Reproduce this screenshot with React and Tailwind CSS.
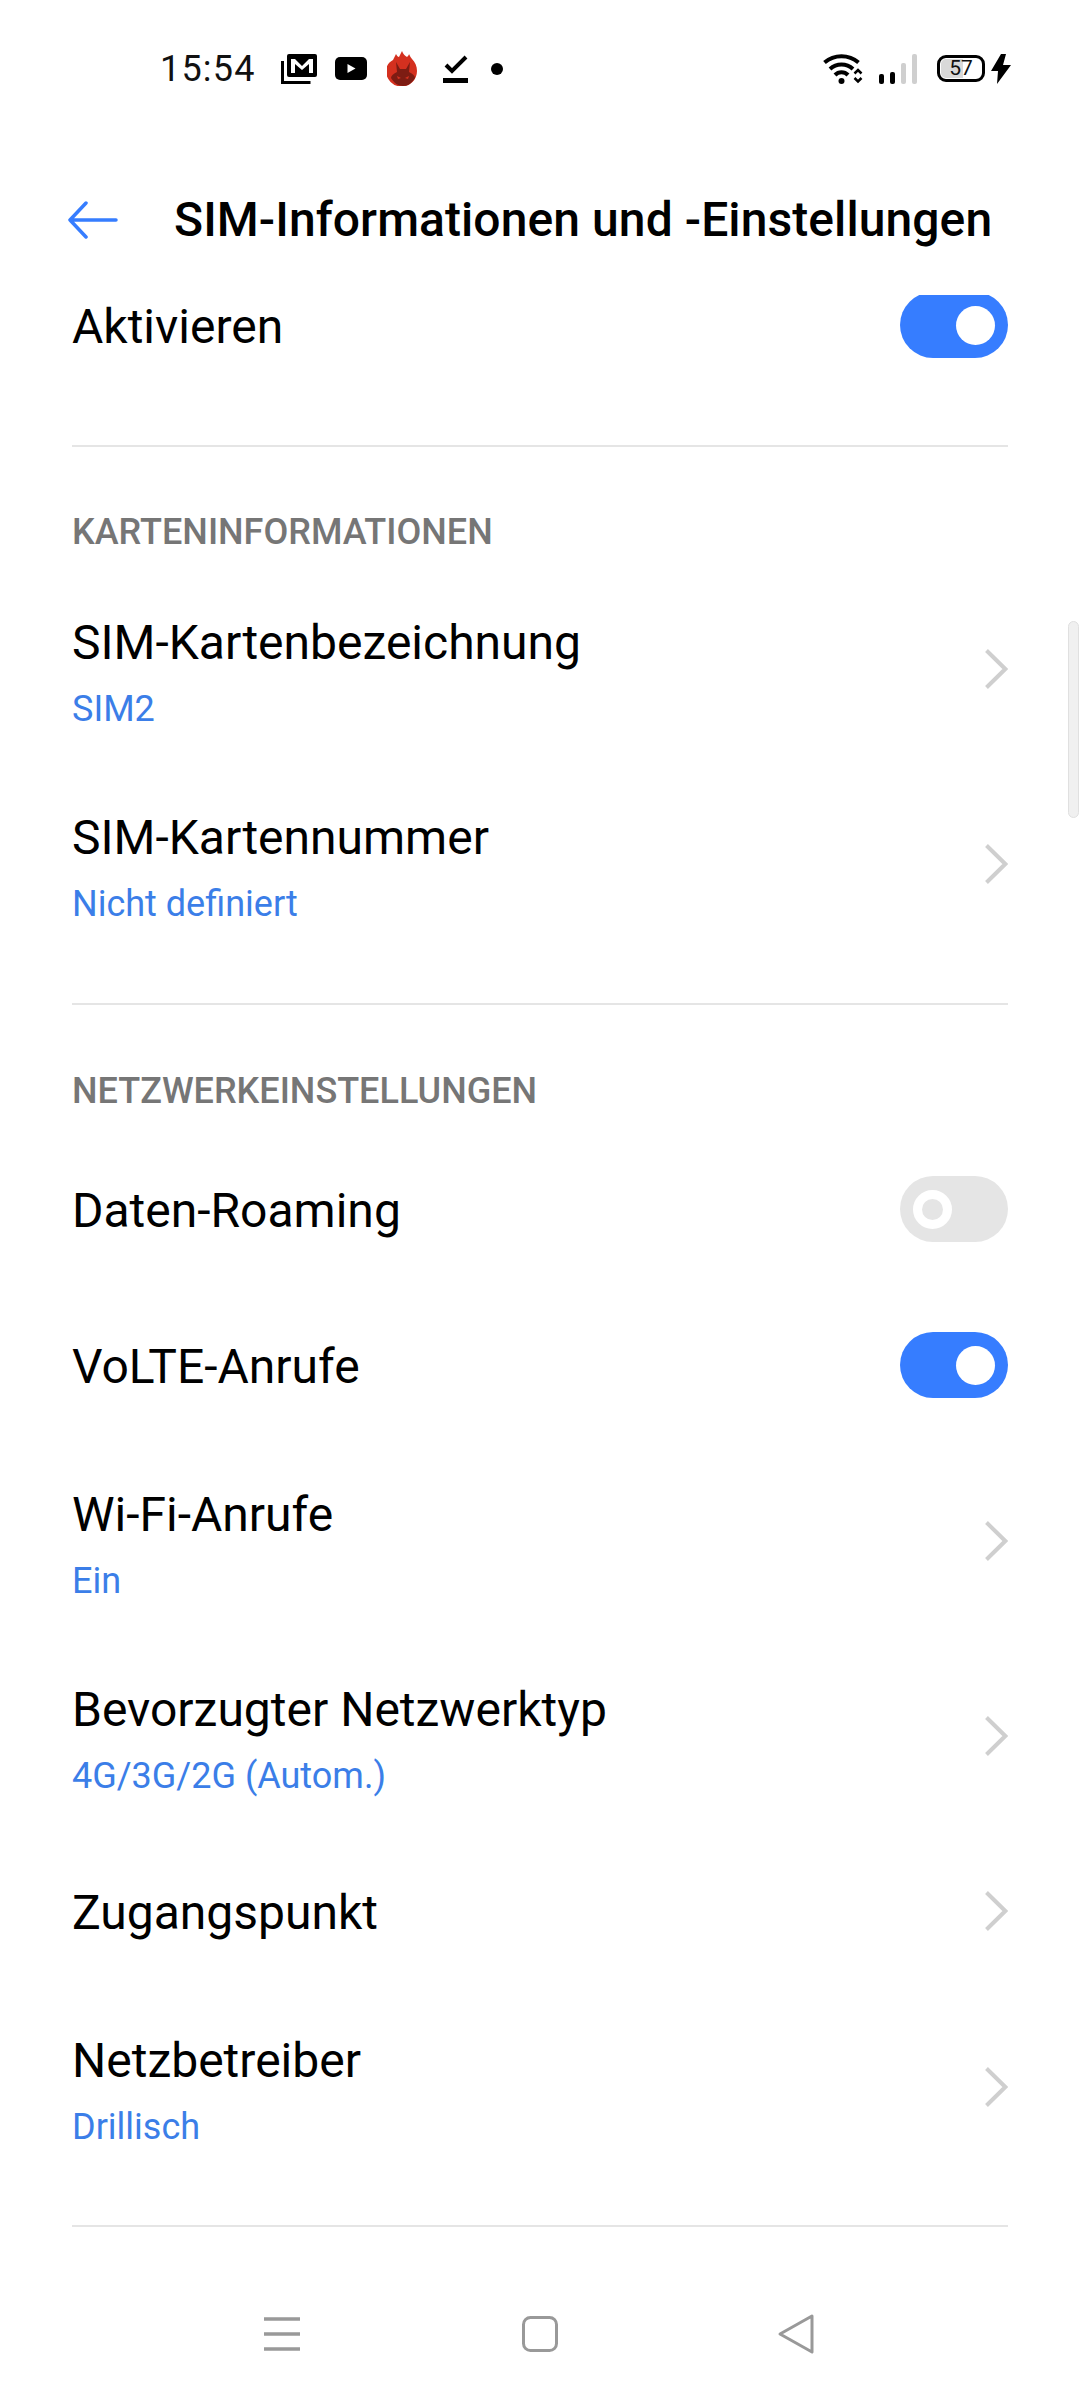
import React from 'react';

const Chevron = () => (
  <svg width="23" height="40" viewBox="0 0 23 40" fill="none" className="shrink-0">
    <path d="M1.500 1.500 L20.300 20 L1.500 38.500" stroke="#cfcfcf" strokeWidth="4" />
  </svg>
);

const Toggle = ({ on }) => (
  <div className={`w-[108px] h-[66px] rounded-full flex items-center shrink-0 ${on ? 'bg-[#367dff] justify-end pr-[13px]' : 'bg-[#e5e5e5] pl-[13px]'}`}>
    {on ? (
      <div className="w-[39px] h-[39px] rounded-full bg-white" />
    ) : (
      <div className="w-[39px] h-[39px] rounded-full border-[9px] border-white" />
    )}
  </div>
);

const Row = ({ title, sub, right }) => (
  <div className={`flex items-center justify-between ${sub ? 'h-[195px]' : 'h-[156px]'}`}>
    <div className={`flex flex-col ${sub ? 'pt-[8px]' : 'pt-[3px]'}`}>
      <div className="text-[48px] leading-[66px] text-black">{title}</div>
      {sub && <div className="mt-[6px] text-[36px] leading-[54px] text-[#3b7ee8]">{sub}</div>}
    </div>
    {right}
  </div>
);

const SectionTitle = ({ children }) => (
  <div className="text-[36px] leading-[48px] font-medium text-[#767676]">{children}</div>
);

const Divider = () => <div className="h-[2px] bg-[#e5e5e5]" />;

const StatusBar = () => (
  <div className="h-[136px] flex items-center justify-between pl-[160px] pr-[69px] pt-[1px]">
    <div className="flex items-center">
      <span className="text-[36px] text-[#111] tracking-[1.2px] w-[121px]">15:54</span>
      <div className="flex items-center">
        <svg width="36" height="30" viewBox="0 0 36 30" className="mr-[18px]">
          <path d="M8 0h26a2 2 0 0 1 2 2v19a2 2 0 0 1-2 2H8a2 2 0 0 1-2-2V2a2 2 0 0 1 2-2z" fill="#000" />
          <path d="M10 19V5h4l7 7 7-7h4v14h-4V10l-7 6-7-6v9z" fill="#fff" />
          <path d="M1.500 7v21.500h28" stroke="#000" strokeWidth="3" fill="none" />
        </svg>
        <svg width="32" height="23" viewBox="0 0 32 23" className="mr-[20px]">
          <rect width="32" height="23" rx="5" fill="#000" />
          <path d="M12.500 7v9l8-4.500z" fill="#fff" />
        </svg>
        <svg width="32" height="35" viewBox="0 0 32 35" className="mr-[24px]">
          <path d="M9 3c1 2 2 3 3 3 1-2 2-4 3-6 1 3 3 5 5 6 1-1 2-2 2-3 1 2 2 4 3 5 3 3 5 7 5 12a15.500 15.500 0 0 1-31 0c0-5 3-9 7-11 1-2 2-4 3-6z" fill="#d4301f" />
          <path d="M9 11l4 7h6l4-7-1 10c4 2 6 4 6 6-3 5-7 8-12 8s-9-3-12-8c0-2 2-4 6-6z" fill="#7d1c13" />
          <path d="M10 25l4 2-3 1zM22 25l-4 2 3 1z" fill="#d4301f" />
        </svg>
        <svg width="25" height="28" viewBox="0 0 25 28" className="mr-[23px]">
          <path d="M3 10l6 6L23 2" stroke="#000" strokeWidth="4" fill="none" />
          <rect y="23" width="25" height="5" fill="#000" />
        </svg>
        <div className="w-[12px] h-[12px] rounded-full bg-black" />
      </div>
    </div>
    <div className="flex items-center">
      <svg width="40" height="30" viewBox="0 0 40 30" className="mr-[16px]">
        <path d="M1.500 8.500a26 26 0 0 1 34 0" stroke="#000" strokeWidth="4" fill="none" />
        <path d="M7 15a17 17 0 0 1 23 0" stroke="#000" strokeWidth="4" fill="none" />
        <path d="M12 21a9 9 0 0 1 13 0" stroke="#000" strokeWidth="4" fill="none" />
        <circle cx="18.500" cy="27" r="3" fill="#000" />
        <path d="M31.500 19.500l3.500-3.500 3.500 3.500M31.500 24l3.500 3.500 3.500-3.500" stroke="#000" strokeWidth="2.500" fill="none" />
      </svg>
      <div className="flex items-end gap-[6px] h-[30px] mr-[20px]">
        <div className="w-[5px] h-[10px] rounded-[2px] bg-black" />
        <div className="w-[5px] h-[12px] rounded-[2px] bg-black" />
        <div className="w-[5px] h-[21px] rounded-[2px] bg-[#cfcfcf]" />
        <div className="w-[5px] h-[30px] rounded-[2px] bg-[#cfcfcf]" />
      </div>
      <div className="relative w-[48px] h-[27px] rounded-[9px] border-[3px] border-black overflow-hidden flex items-center justify-center mr-[6px]">
        <div className="absolute left-[1px] top-[1px] bottom-[1px] w-[22px] rounded-l-[5px] bg-[#d9d9d9]" />
        <span className="relative text-[21px] leading-none text-[#111]">57</span>
      </div>
      <svg width="20" height="30" viewBox="0 0 20 30">
        <path d="M10 0L0 17h7l-1 13 14-19h-8l3-11z" fill="#000" />
      </svg>
    </div>
  </div>
);

const Header = () => (
  <div className="h-[159px] flex items-center pl-[68px] pt-[8px]">
    <svg width="50" height="38" viewBox="0 0 50 38" fill="none" className="shrink-0 mr-[56px]">
      <path d="M18 2L2 19l16 17M2 19h46" stroke="#367dff" strokeWidth="3.500" strokeLinecap="round" strokeLinejoin="round" />
    </svg>
    <div className="text-[48px] font-medium text-black tracking-[0.08px] whitespace-nowrap">SIM-Informationen und -Einstellungen</div>
  </div>
);

const NavBar = () => (
  <div className="h-[173px] flex items-center pl-[264px] pt-[41px]">
    <svg width="36" height="36" viewBox="0 0 36 36" className="mr-[222px]">
      <path d="M0 3h36M0 18h36M0 33h36" stroke="#999" strokeWidth="3.500" />
    </svg>
    <svg width="36" height="36" viewBox="0 0 36 36" className="mr-[219px]">
      <rect x="1.500" y="1.500" width="33" height="33" rx="7" stroke="#999" strokeWidth="3" fill="none" />
    </svg>
    <svg width="38" height="42" viewBox="0 0 38 42">
      <path d="M35 3L3 21l32 18z" stroke="#999" strokeWidth="3" strokeLinejoin="round" fill="none" />
    </svg>
  </div>
);

export default function App() {
  return (
    <div className="relative w-[1080px] h-[2400px] bg-white overflow-hidden" style={{ fontFamily: 'Roboto, "Noto Sans", sans-serif' }}>
      <StatusBar />
      <Header />
      <div className="h-[1932px] overflow-hidden px-[72px]">
        <div className="-mt-[48px]">
          <Row title="Aktivieren" right={<Toggle on />} />
        </div>
        <div className="pt-[42px]"><Divider /></div>
        <div className="pt-[61px] pb-[15px]"><SectionTitle>KARTENINFORMATIONEN</SectionTitle></div>
        <Row title="SIM-Kartenbezeichnung" sub="SIM2" right={<Chevron />} />
        <Row title="SIM-Kartennummer" sub="Nicht definiert" right={<Chevron />} />
        <div className="pt-[42px]"><Divider /></div>
        <div className="pt-[62px] pb-[16px]"><SectionTitle>NETZWERKEINSTELLUNGEN</SectionTitle></div>
        <Row title="Daten-Roaming" right={<Toggle />} />
        <Row title="VoLTE-Anrufe" right={<Toggle on />} />
        <Row title="Wi-Fi-Anrufe" sub="Ein" right={<Chevron />} />
        <Row title="Bevorzugter Netzwerktyp" sub="4G/3G/2G (Autom.)" right={<Chevron />} />
        <Row title="Zugangspunkt" right={<Chevron />} />
        <Row title="Netzbetreiber" sub="Drillisch" right={<Chevron />} />
        <div className="pt-[41px]"><Divider /></div>
      </div>
      <NavBar />
      <div className="absolute right-[1px] top-[621px] w-[11px] h-[197px] rounded-full bg-[#f0f0f0] border border-[#e0e0e0]" />
    </div>
  );
}
